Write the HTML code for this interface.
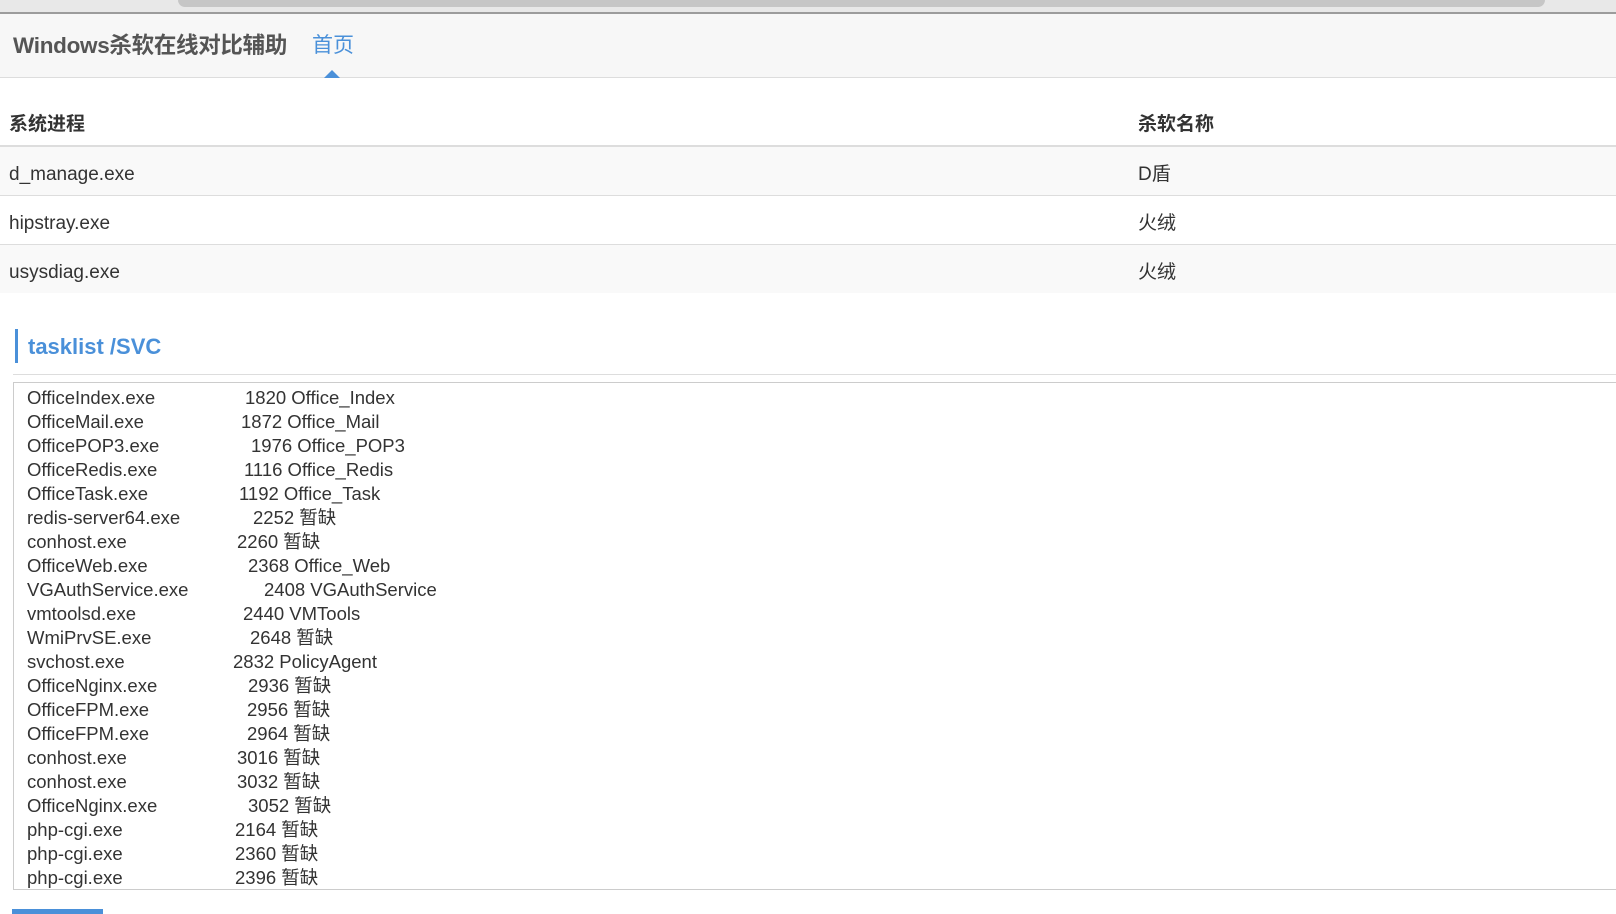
<!DOCTYPE html>
<html><head><meta charset="utf-8"><style>
body{margin:0;width:1616px;height:914px;overflow:hidden;background:#fff;font-family:"Liberation Sans","Noto Sans CJK SC",sans-serif;color:#333;position:relative}
.abs{position:absolute}
.top{left:0;top:0;width:1616px;height:12px;background:#e8e8e8}
.thumb{left:178px;top:0;width:1367px;height:7px;background:#c6c6c6;border-radius:0 0 10px 10px}
.tl{left:0;top:12px;width:1616px;height:2px;background:#9c9c9c}
.hdr{left:0;top:14px;width:1616px;height:63px;background:#f7f7f7;border-bottom:1px solid #ddd}
.title{left:13px;top:31px;font-size:22.5px;line-height:30px;color:#555;font-weight:bold;letter-spacing:-0.3px}
.home{left:312px;top:31px;font-size:21px;line-height:30px;color:#4a90d9}
.tri{left:324px;top:70px;width:0;height:0;border-left:8px solid transparent;border-right:8px solid transparent;border-bottom:8px solid #4a90d9}
.th{top:112px;font-size:19px;line-height:26px;font-weight:bold;color:#333}
.row{left:0;width:1616px;height:48px;border-bottom:1px solid #ddd;font-size:19px;color:#333}
.row span{position:absolute;top:15px;line-height:26px}
.sec{left:15px;top:329px;width:3px;height:34px;background:#4a90d9}
.st{left:28px;top:332px;font-size:22px;line-height:30px;font-weight:bold;color:#4a90d9}
.pre{left:13px;top:382px;width:1610px;height:506px;border:1px solid #ccc;border-right:none;overflow:hidden;font-size:18.5px;color:#333}
.l{position:absolute;left:13px;height:24px;line-height:24px;white-space:nowrap}
.l b{font-weight:normal;position:absolute;top:0}
</style></head><body>
<div class="abs top"></div><div class="abs thumb"></div><div class="abs tl"></div>
<div class="abs hdr"></div>
<div class="abs title">Windows杀软在线对比辅助</div>
<div class="abs home">首页</div>
<div class="abs tri"></div>
<div class="abs th" style="left:9px">系统进程</div>
<div class="abs th" style="left:1138px">杀软名称</div>
<div class="abs" style="left:0;top:145px;width:1616px;height:2px;background:#ddd"></div>
<div class="abs row" style="top:147px;background:#f9f9f9"><span style="left:9px">d_manage.exe</span><span style="left:1138px">D盾</span></div>
<div class="abs row" style="top:196px;background:#fff"><span style="left:9px">hipstray.exe</span><span style="left:1138px">火绒</span></div>
<div class="abs row" style="top:245px;background:#f9f9f9;border-bottom:none"><span style="left:9px">usysdiag.exe</span><span style="left:1138px">火绒</span></div>
<div class="abs sec"></div>
<div class="abs st">tasklist /SVC</div>
<div class="abs" style="left:13px;top:374px;width:1603px;height:1px;background:#ddd"></div>
<div class="abs pre">
<div class="l" style="top:3px">OfficeIndex.exe<b style="left:218px">1820 Office_Index</b></div>
<div class="l" style="top:27px">OfficeMail.exe<b style="left:214px">1872 Office_Mail</b></div>
<div class="l" style="top:51px">OfficePOP3.exe<b style="left:224px">1976 Office_POP3</b></div>
<div class="l" style="top:75px">OfficeRedis.exe<b style="left:217px">1116 Office_Redis</b></div>
<div class="l" style="top:99px">OfficeTask.exe<b style="left:212px">1192 Office_Task</b></div>
<div class="l" style="top:123px">redis-server64.exe<b style="left:226px">2252 暂缺</b></div>
<div class="l" style="top:147px">conhost.exe<b style="left:210px">2260 暂缺</b></div>
<div class="l" style="top:171px">OfficeWeb.exe<b style="left:221px">2368 Office_Web</b></div>
<div class="l" style="top:195px">VGAuthService.exe<b style="left:237px">2408 VGAuthService</b></div>
<div class="l" style="top:219px">vmtoolsd.exe<b style="left:216px">2440 VMTools</b></div>
<div class="l" style="top:243px">WmiPrvSE.exe<b style="left:223px">2648 暂缺</b></div>
<div class="l" style="top:267px">svchost.exe<b style="left:206px">2832 PolicyAgent</b></div>
<div class="l" style="top:291px">OfficeNginx.exe<b style="left:221px">2936 暂缺</b></div>
<div class="l" style="top:315px">OfficeFPM.exe<b style="left:220px">2956 暂缺</b></div>
<div class="l" style="top:339px">OfficeFPM.exe<b style="left:220px">2964 暂缺</b></div>
<div class="l" style="top:363px">conhost.exe<b style="left:210px">3016 暂缺</b></div>
<div class="l" style="top:387px">conhost.exe<b style="left:210px">3032 暂缺</b></div>
<div class="l" style="top:411px">OfficeNginx.exe<b style="left:221px">3052 暂缺</b></div>
<div class="l" style="top:435px">php-cgi.exe<b style="left:208px">2164 暂缺</b></div>
<div class="l" style="top:459px">php-cgi.exe<b style="left:208px">2360 暂缺</b></div>
<div class="l" style="top:483px">php-cgi.exe<b style="left:208px">2396 暂缺</b></div>
</div>
<div class="abs" style="left:12px;top:909px;width:91px;height:5px;background:#4a90d9"></div>
</body></html>
